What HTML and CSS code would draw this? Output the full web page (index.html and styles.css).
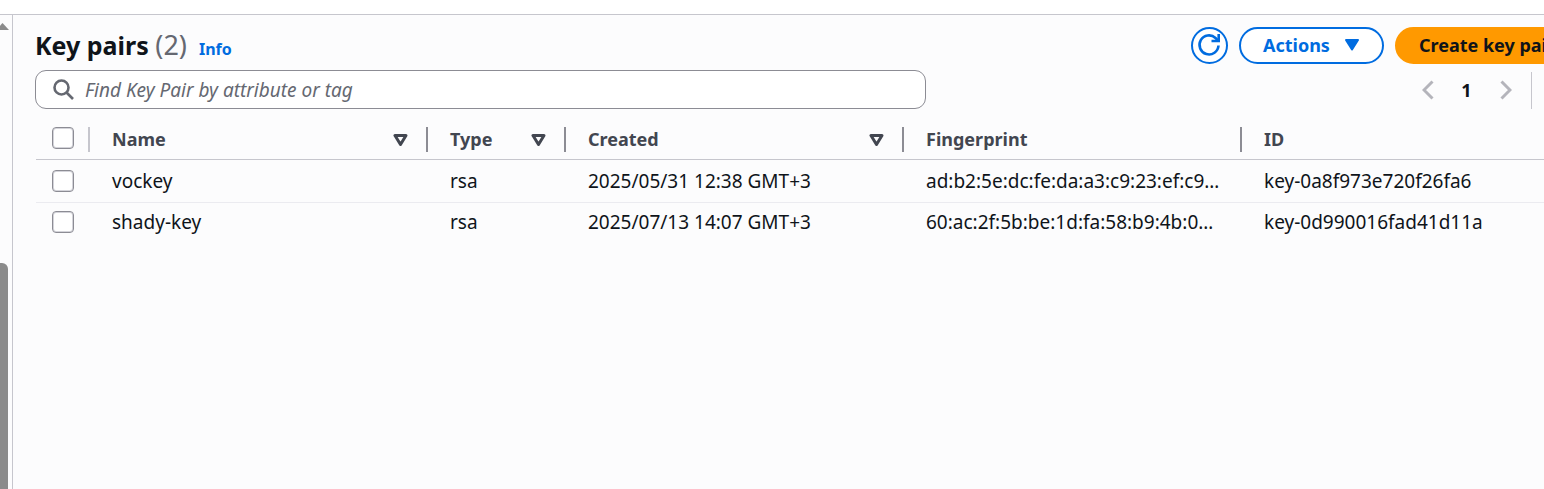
FILE: index.html
```html
<!DOCTYPE html>
<html lang="en">
<head>
<meta charset="utf-8">
<title>Key pairs</title>
<link rel="stylesheet" href="styles.css">
</head>
<body>
<div class="topbar"></div>
<div class="shell">
  <aside class="gutter">
    <svg class="gutter-arrow" width="9" height="8" viewBox="0 0 9 8"><path d="M2.500 0 9 7H-4z" fill="#8b8b8b"/></svg>
    <div class="gutter-thumb"></div>
  </aside>
  <main class="main">
    <div class="panel">
      <header class="header">
        <h1 class="title">Key pairs <span class="count">(2)</span></h1>
        <a class="info" href="#">Info</a>
        <div class="actions">
          <button class="btn btn-icon" type="button" aria-label="Refresh">
            <svg width="24" height="24" viewBox="0 0 24 24" fill="none" stroke="currentColor" stroke-width="2.600"><path d="M21.500 12.500A9.500 9.500 0 1 1 18.500 5L21 7.500"/><path d="M21.700 1v7h-7.200"/></svg>
          </button>
          <button class="btn" type="button">Actions
            <svg width="16" height="12" viewBox="0 0 16 12"><path d="M2 1h12L8 10.500z" fill="currentColor" stroke="currentColor" stroke-width="2" stroke-linejoin="round"/></svg>
          </button>
          <button class="btn btn-primary" type="button">Create key pair</button>
        </div>
      </header>
      <div class="tools">
        <label class="search">
          <svg width="22" height="22" viewBox="0 0 22 22" fill="none" stroke="#656871" stroke-width="2.600"><circle cx="8.500" cy="8.500" r="7"/><path d="M13.500 13.500l6.500 6.500"/></svg>
          <input class="search-input" type="text" placeholder="Find Key Pair by attribute or tag" aria-label="Find Key Pair by attribute or tag">
        </label>
        <nav class="pager" aria-label="Pages">
          <button class="page-btn" type="button" aria-label="Previous page"><svg width="12" height="20" viewBox="0 0 12 20"><path d="M10.500 1.500 2 10l8.500 8.500"/></svg></button>
          <button class="page-btn page-current" type="button">1</button>
          <button class="page-btn" type="button" aria-label="Next page"><svg width="12" height="20" viewBox="0 0 12 20"><path d="M1.500 1.500 10 10l-8.500 8.500"/></svg></button>
        </nav>
      </div>
      <table class="table">
        <colgroup><col class="c-check"><col class="c-wide"><col class="c-type"><col class="c-wide"><col class="c-wide"><col></colgroup>
        <thead>
          <tr>
            <th class="check"><div class="head head-light"><input class="box" type="checkbox" aria-label="Select all"></div></th>
            <th><div class="head">Name <svg class="sort" width="15" height="12" viewBox="0 0 15 12"><path d="M2 1.500h11L7.500 10.500z"/></svg></div></th>
            <th><div class="head">Type <svg class="sort" width="15" height="12" viewBox="0 0 15 12"><path d="M2 1.500h11L7.500 10.500z"/></svg></div></th>
            <th><div class="head">Created <svg class="sort" width="15" height="12" viewBox="0 0 15 12"><path d="M2 1.500h11L7.500 10.500z"/></svg></div></th>
            <th><div class="head">Fingerprint</div></th>
            <th><div class="head head-last">ID</div></th>
          </tr>
        </thead>
        <tbody>
          <tr>
            <td class="check"><input class="box" type="checkbox" aria-label="Select vockey"></td>
            <td>vockey</td><td>rsa</td><td>2025/05/31 12:38 GMT+3</td><td>ad:b2:5e:dc:fe:da:a3:c9:23:ef:c9…</td><td>key-0a8f973e720f26fa6</td>
          </tr>
          <tr>
            <td class="check"><input class="box" type="checkbox" aria-label="Select shady-key"></td>
            <td>shady-key</td><td>rsa</td><td>2025/07/13 14:07 GMT+3</td><td>60:ac:2f:5b:be:1d:fa:58:b9:4b:0…</td><td>key-0d990016fad41d11a</td>
          </tr>
        </tbody>
      </table>
    </div>
  </main>
</div>
</body>
</html>
```
FILE: styles.css
```css
* { box-sizing: border-box; }

body {
  margin: 0;
  min-height: 100vh;
  display: flex;
  flex-direction: column;
  background: #fcfcfd;
  color: #0f141a;
  font: 18px/24px "Noto Sans", "Open Sans", sans-serif;
  overflow: hidden;
}

button, input { font: inherit; color: inherit; }

.topbar {
  height: 15px;
  background: #fff;
  border-bottom: 1px solid #c6c6cd;
}

.shell { flex: 1; display: flex; }

.gutter {
  width: 13px;
  padding-top: 8px;
  border-right: 1px solid #c6c6cd;
  display: flex;
  flex-direction: column;
}

.gutter-thumb {
  flex: 1;
  width: 8px;
  margin-top: 232px;
  background: #8b8b8b;
  border-top-right-radius: 6px;
}

.main { flex: 1; min-width: 0; overflow: hidden; }

/* The panel runs past the right edge of the viewport. */
.panel { margin: 12px -35px 0 22px; }

.header { display: flex; align-items: center; height: 37px; }

.title { margin: 0; padding-bottom: 2px; font-size: 25px; line-height: 36px; font-weight: 700; }
.count { font-size: 27px; line-height: 32px; font-weight: 400; color: #656871; }

.info {
  margin: 6px 0 0 12px;
  font-size: 16px;
  font-weight: 700;
  color: #006ce0;
  text-decoration: none;
}

.actions { margin-left: auto; display: flex; gap: 11px; }

.btn {
  height: 37px;
  padding: 0 22px 2px;
  display: flex;
  align-items: center;
  gap: 14px;
  border: 2px solid #006ce0;
  border-radius: 19px;
  background: #fff;
  color: #006ce0;
  font-weight: 700;
  white-space: nowrap;
}
.btn-icon { width: 37px; padding: 0 0 1px; justify-content: center; }
.btn-primary { background: #ff9900; border-color: #ff9900; color: #0f141a; }

.tools { display: flex; justify-content: space-between; margin-top: 6px; }

.search {
  width: 891px;
  height: 39px;
  padding: 0 17px;
  display: flex;
  align-items: center;
  gap: 10px;
  border: 1px solid #8c8c94;
  border-radius: 11px;
  background: #fff;
}
.search-input { flex: 1; padding: 0; border: 0; outline: 0; background: none; font-size: 19px; }
.search-input::placeholder { color: #656871; font-style: italic; opacity: 1; }

.pager {
  height: 37px;
  margin-top: 2px;
  padding: 0 6px 2px 0;
  margin-right: 47px;
  display: flex;
  align-items: center;
  border-right: 1px solid #c6c6cd;
}
.page-btn {
  width: 39px;
  padding: 0;
  border: 0;
  background: none;
  display: flex;
  justify-content: center;
}
.page-btn path { fill: none; stroke: #b4b4bb; stroke-width: 3; }
.page-current { font-weight: 700; }

.table {
  width: 100%;
  margin-top: 10px;
  margin-left: 1px;
  table-layout: fixed;
  border-collapse: separate;
  border-spacing: 0;
}
.c-check { width: 54px; }
.c-wide { width: 338px; }
.c-type { width: 138px; }

th { height: 41px; padding: 0; text-align: left; color: #424650; border-bottom: 1px solid #c6c6cd; }
td { height: 42px; padding: 0 0 0 22px; font-size: 19px; white-space: nowrap; }
tbody tr:first-child td { height: 43px; border-bottom: 1px solid #ebebf0; }
tbody tr:last-child td { height: 38px; }

.head {
  height: 25px;
  padding: 0 18px 0 22px;
  display: flex;
  align-items: center;
  justify-content: space-between;
  border-right: 2px solid #8c8c94;
}
.head-light { padding: 0 0 2px 16px; border-color: #c6c6cd; }
.head-last { border-right: 0; }
.sort { margin-top: 2px; }
.sort path { fill: none; stroke: #424650; stroke-width: 3; stroke-linejoin: round; }

td.check { padding-left: 16px; }
.box {
  appearance: none;
  display: block;
  width: 22px;
  height: 22px;
  margin: 0;
  border: 1px solid #8c8c94;
  border-radius: 4px;
  background: #fff;
  box-shadow: inset 0 0 0 1px #d4d4da;
}
```
